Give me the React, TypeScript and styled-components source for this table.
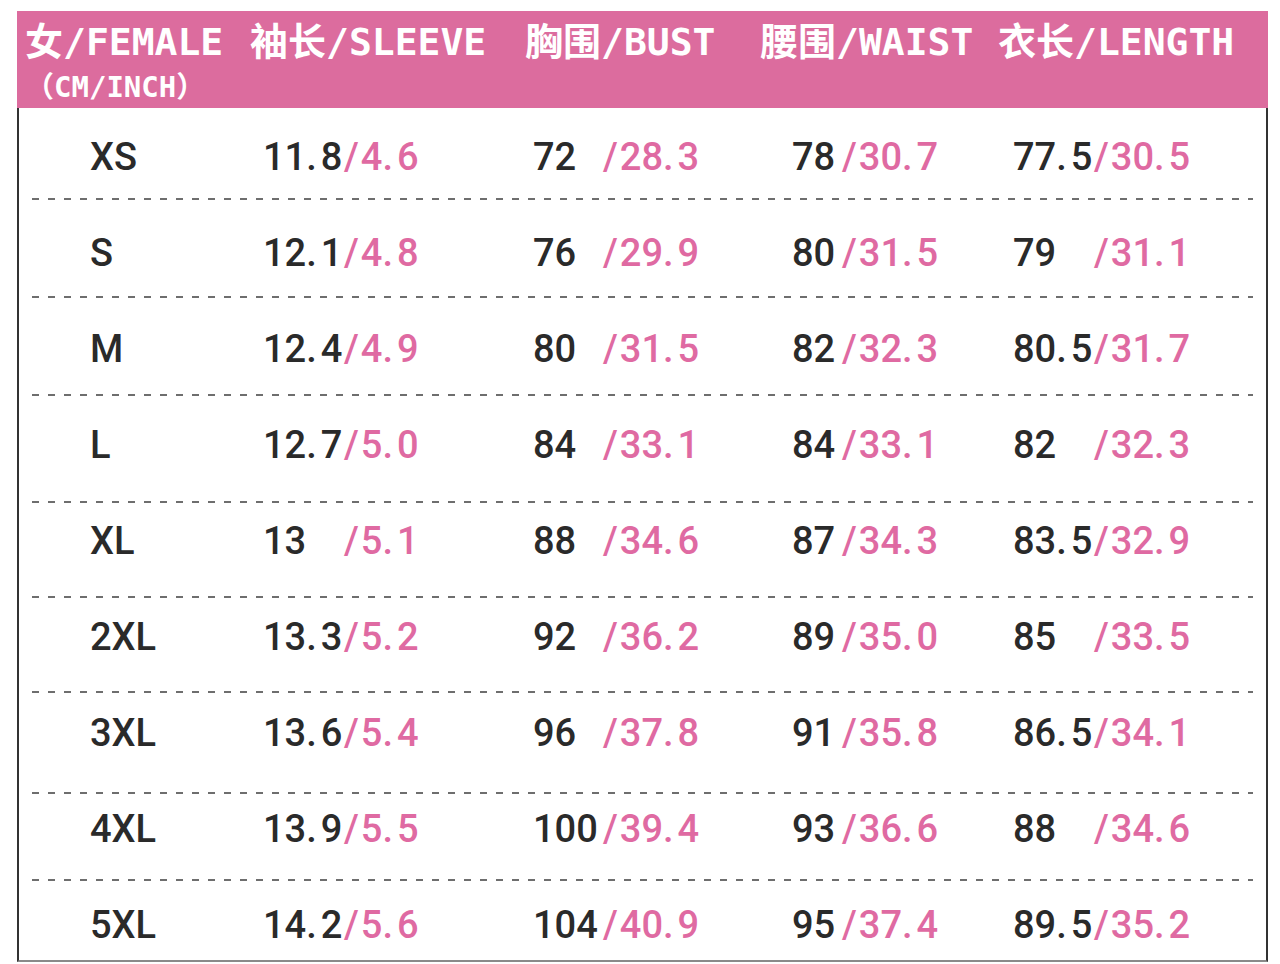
import styled, { createGlobalStyle } from "styled-components"

// size chart data, cm / inch
type Pair = [string, string]

interface SizeRow {
    size: string
    h: number
    pad: number
    sleeve: Pair
    bust: Pair
    waist: Pair
    length: Pair
}

const rows: SizeRow[] = [
    { size: "XS", h: 90, pad: 29, sleeve: ["11.8", "4.6"], bust: ["72", "28.3"], waist: ["78", "30.7"], length: ["77.5", "30.5"] },
    { size: "S", h: 96, pad: 33, sleeve: ["12.1", "4.8"], bust: ["76", "29.9"], waist: ["80", "31.5"], length: ["79", "31.1"] },
    { size: "M", h: 96, pad: 31, sleeve: ["12.4", "4.9"], bust: ["80", "31.5"], waist: ["82", "32.3"], length: ["80.5", "31.7"] },
    { size: "L", h: 105, pad: 29, sleeve: ["12.7", "5.0"], bust: ["84", "33.1"], waist: ["84", "33.1"], length: ["82", "32.3"] },
    { size: "XL", h: 93, pad: 18, sleeve: ["13", "5.1"], bust: ["88", "34.6"], waist: ["87", "34.3"], length: ["83.5", "32.9"] },
    { size: "2XL", h: 93, pad: 19, sleeve: ["13.3", "5.2"], bust: ["92", "36.2"], waist: ["89", "35.0"], length: ["85", "33.5"] },
    { size: "3XL", h: 99, pad: 20, sleeve: ["13.6", "5.4"], bust: ["96", "37.8"], waist: ["91", "35.8"], length: ["86.5", "34.1"] },
    { size: "4XL", h: 85, pad: 15, sleeve: ["13.9", "5.5"], bust: ["100", "39.4"], waist: ["93", "36.6"], length: ["88", "34.6"] },
    { size: "5XL", h: 79, pad: 24, sleeve: ["14.2", "5.6"], bust: ["104", "40.9"], waist: ["95", "37.4"], length: ["89.5", "35.2"] },
]

// width of the cm part in each column, so the "/inch" part lines up
const cmWidths = { sleeve: 81, bust: 70, waist: 50, length: 81 }

function Num({ value }: { value: string }) {
    const [whole, frac] = value.split(".")
    if (frac === undefined) return <>{whole}</>
    return (
        <>
            {whole}
            <Dot>.</Dot>
            {frac}
        </>
    )
}

function Measure({ pair, cmW }: { pair: Pair; cmW: number }) {
    return (
        <MeasureCell>
            <CmPart $w={cmW}>
                <Num value={pair[0]} />
            </CmPart>
            <InchPart>
                <Slash>/</Slash>
                <Num value={pair[1]} />
            </InchPart>
        </MeasureCell>
    )
}

function App() {
    return (
        <>
            <GlobalStyle />
            <Sheet>
                <HeaderBand>
                    <HeadCell>
                        <HeadLine>女/FEMALE</HeadLine>
                        <SubLine>（CM/INCH）</SubLine>
                    </HeadCell>
                    <HeadCell>
                        <HeadLine>袖长/SLEEVE</HeadLine>
                    </HeadCell>
                    <HeadCell>
                        <HeadLine>胸围/BUST</HeadLine>
                    </HeadCell>
                    <HeadCell>
                        <HeadLine>腰围/WAIST</HeadLine>
                    </HeadCell>
                    <HeadCell>
                        <HeadLine>衣长/LENGTH</HeadLine>
                    </HeadCell>
                </HeaderBand>

                <Body>
                    {rows.map((r, i) => (
                        <div key={r.size}>
                            <Row $h={r.h} $pad={r.pad}>
                                <SizeLabel>{r.size}</SizeLabel>
                                <Measure pair={r.sleeve} cmW={cmWidths.sleeve} />
                                <Measure pair={r.bust} cmW={cmWidths.bust} />
                                <Measure pair={r.waist} cmW={cmWidths.waist} />
                                <Measure pair={r.length} cmW={cmWidths.length} />
                            </Row>
                            {i < rows.length - 1 && <Divider />}
                        </div>
                    ))}
                </Body>
            </Sheet>
        </>
    )
}

export default App

const GlobalStyle = createGlobalStyle`
    html, body {
        margin: 0;
        padding: 0;
        background: #fff;
    }
    * {
        box-sizing: border-box;
    }
`

const Sheet = styled.div`
    width: 1251px;
    margin: 11px 0 0 17px;
`

// header styled components

const HeaderBand = styled.div`
    height: 97px;
    background-color: #dc6c9e;
    display: grid;
    grid-template-columns: 225px 275px 235px 238px 1fr;
    padding: 12px 0 0 8px;
    color: #fff;
    font-family: "DejaVu Sans Mono", "Noto Sans CJK SC", monospace;
    font-weight: bold;
`

const HeadCell = styled.div`
    display: flex;
    flex-direction: column;
`

const HeadLine = styled.div`
    font-size: 38px;
    line-height: 38px;
    white-space: nowrap;
`

const SubLine = styled.div`
    font-size: 29px;
    line-height: 29px;
    margin-top: 12px;
    white-space: nowrap;
`

// table body

const Body = styled.div`
    border-left: 2px solid #333;
    border-right: 2px solid #333;
    border-bottom: 2px solid #8a8a8a;
`

interface RowProps {
    $h: number
    $pad: number
}

const Row = styled.div<RowProps>`
    height: ${(p) => p.$h}px;
    padding: ${(p) => p.$pad}px 0 0 71px;
    display: grid;
    grid-template-columns: 173px 270px 259px 221px 1fr;
    align-items: start;
    font-family: Roboto, "Liberation Sans", sans-serif;
    font-size: 38px;
    line-height: 40px;
    color: #2a2a2a;
`

const SizeLabel = styled.div`
    font-weight: 500;
`

const MeasureCell = styled.div`
    display: flex;
    white-space: nowrap;
    font-weight: 500;
`

const CmPart = styled.span<{ $w: number }>`
    width: ${(p) => p.$w}px;
    flex-shrink: 0;
    color: #2a2a2a;
`

const InchPart = styled.span`
    color: #df6aa2;
`

const Slash = styled.span`
    margin-right: 2px;
`

const Dot = styled.span`
    margin-right: 4px;
`

const Divider = styled.div`
    height: 2px;
    margin: 0 13px 0 13px;
    background-image: repeating-linear-gradient(
        to right,
        #6e6e6e 0px,
        #6e6e6e 7px,
        transparent 7px,
        transparent 16px
    );
`
